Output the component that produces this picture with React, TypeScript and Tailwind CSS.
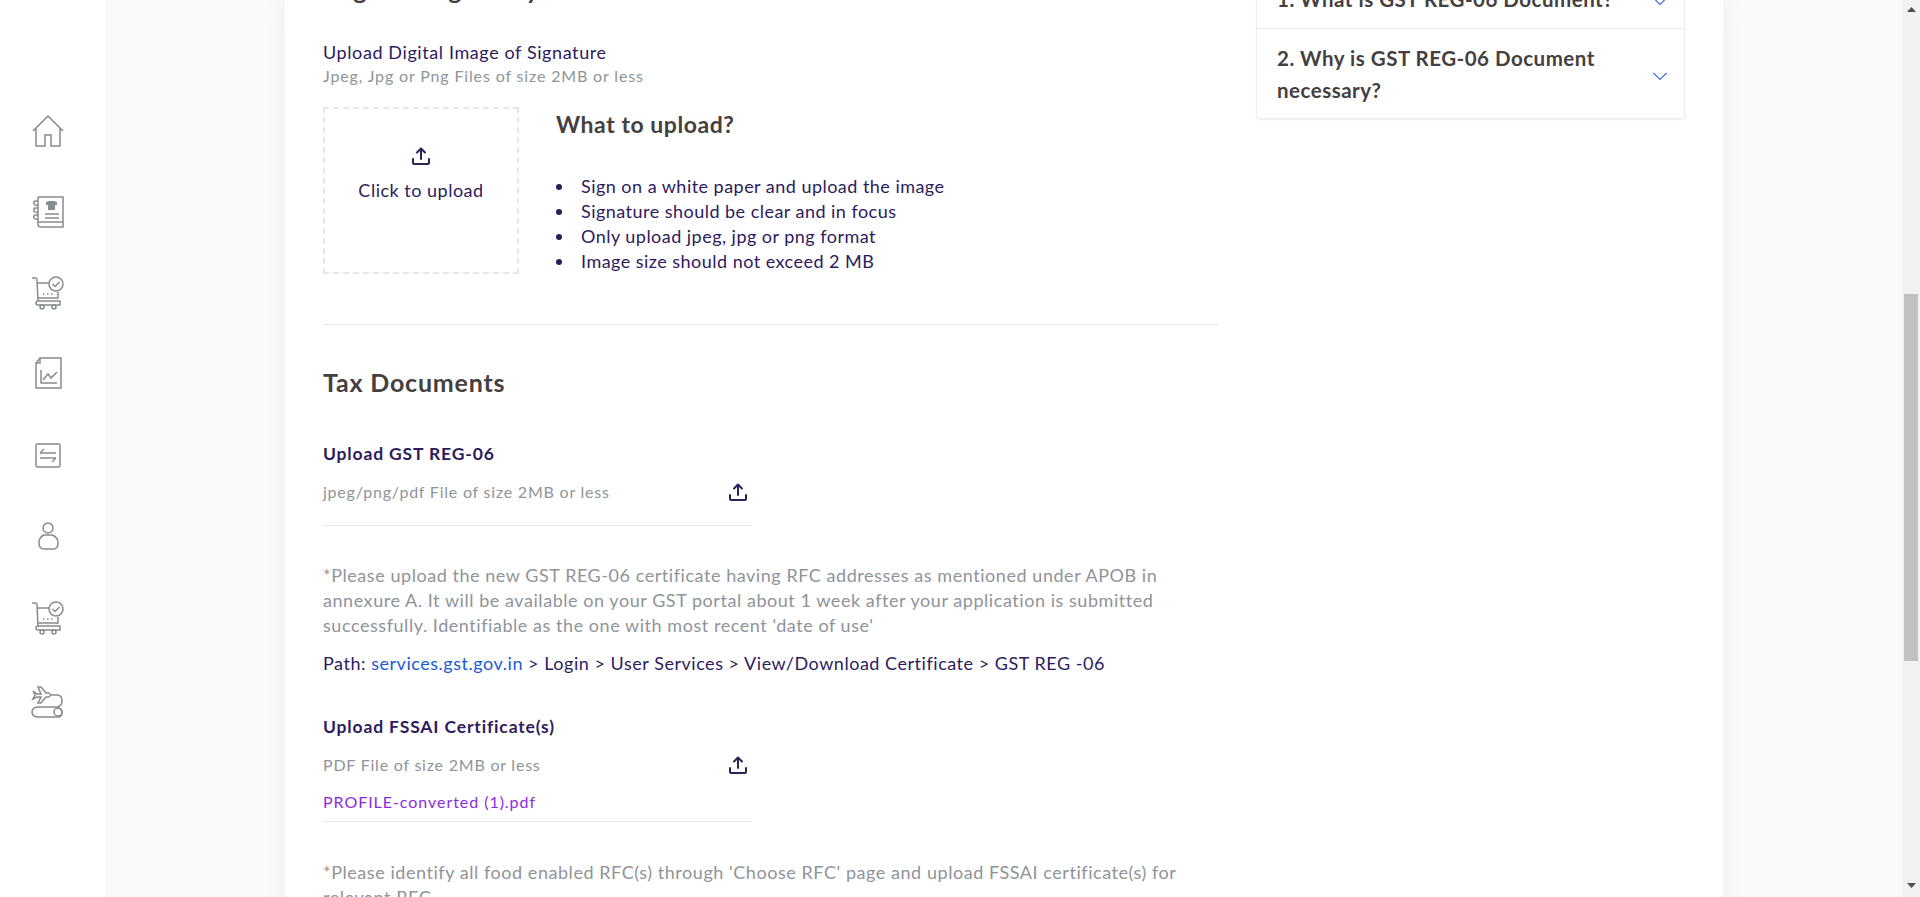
import React from "react";

const IC = "#868c90";

function Home() {
  return (
    <svg width="34" height="34" viewBox="0 0 34 34" fill="none" stroke={IC} strokeWidth="1.5">
      <path d="M2 17 L17 2 L32 17" />
      <path d="M5 14 V32 H14 V21 H20 V32 H29 V14" />
    </svg>
  );
}
function Book() {
  return (
    <svg width="34" height="34" viewBox="0 0 34 34" fill="none" stroke={IC} strokeWidth="1.5">
      <path d="M7 2 H32 V32 H10 Q7 32 7 29 V2" />
      <path d="M7 28 Q7 27 10 27 H32" />
      <path d="M7 6 H4 Q2 7 3 9 Q4 11 7 10 M7 13 H4 Q2 14 3 16 Q4 18 7 17 M7 20 H4 Q2 21 3 23 Q4 25 7 24" />
      <path d="M15 7 L18 6 H23 L26 7 V10 H24 V15 H17 V10 H15 Z" fill={IC} stroke="none" />
      <path d="M14 19 H28 M14 23 H28" />
    </svg>
  );
}
function Cart() {
  return (
    <svg width="34" height="34" viewBox="0 0 34 34" fill="none" stroke={IC} strokeWidth="1.5">
      <path d="M1 2 H5 Q6 2 6 4 L7 25" />
      <path d="M6 7 H18 M27 16 V22 H7" />
      <path d="M9 25 H29 V29 H7 Q5 29 5 27 Q5 25 7 25 Z" />
      <circle cx="11" cy="31" r="2" />
      <circle cx="23" cy="31" r="2" />
      <circle cx="25" cy="8" r="7" />
      <path d="M21.5 8 L24 10.5 L28.5 6" />
      <path d="M12 18 H13.5 M16 18 H17.5 M20 18 H21.5" />
    </svg>
  );
}
function Report() {
  return (
    <svg width="34" height="34" viewBox="0 0 34 34" fill="none" stroke={IC} strokeWidth="1.5">
      <path d="M9 1 H30 V31 H5 V6 Z" />
      <path d="M9 1 V6 H5" />
      <path d="M10 13 V26 H26" />
      <path d="M12 23 L17 17 L20 21 L26 15" />
    </svg>
  );
}
function Swap() {
  return (
    <svg width="34" height="34" viewBox="0 0 34 34" fill="none" stroke={IC} strokeWidth="1.5">
      <rect x="5" y="6" width="24" height="23" rx="1.5" />
      <path d="M9 15 H25 M13 11 L9 15 M9 20 H25 M21 24 L25 20" />
    </svg>
  );
}
function User() {
  return (
    <svg width="34" height="34" viewBox="0 0 34 34" fill="none" stroke={IC} strokeWidth="1.5">
      <circle cx="17" cy="9" r="5" />
      <path d="M13 16 H21 Q27 18 27 24 Q27 30 22 30 H13 Q8 30 8 24 Q8 18 13 16 Z" />
    </svg>
  );
}
function Travel() {
  return (
    <svg width="34" height="34" viewBox="0 0 34 34" fill="none" stroke={IC} strokeWidth="1.5">
      <path d="M2 5 L6 8 H10 L7 1 H10 L15 7 H18 Q21 9 18 11 H15 L10 17 H7 L10 11 H6 L2 13 L4 9 Z" />
      <path d="M19 9 H26 Q31 9 31 15 Q31 20 26 21 H8 Q1 21 1 26 Q1 31 8 31 H27" />
      <circle cx="27" cy="26" r="4" />
      <path d="M27 22 Q31 23 31 26 Q31 31 27 31" />
    </svg>
  );
}
function UploadIcon() {
  return (
    <svg width="20" height="20" viewBox="0 0 20 20" fill="none" stroke="#2d2159" strokeWidth="2" strokeLinecap="round" strokeLinejoin="round">
      <path d="M10 13 V3 M6 6.5 L10 2.5 L14 6.5" />
      <path d="M2 13 V17 Q2 18 3 18 H17 Q18 18 18 17 V13" />
    </svg>
  );
}
function Chevron({ className }: { className?: string }) {
  return (
    <svg className={className} width="14" height="9" viewBox="0 0 14 9" fill="none" stroke="#3b6fe6" strokeWidth="1.2">
      <path d="M0.5 1 L7 7.5 L13.5 1" />
    </svg>
  );
}

function FileRow({ title, hint, file }: { title: string; hint: string; file?: string }) {
  return (
    <div className="w-[429px]">
      <div className="text-[17.5px] leading-[25px] font-bold tracking-[0.85px] text-[#2d1b5e]">{title}</div>
      <div className="mt-[13px] flex items-center justify-between">
        <span className="text-[16px] leading-[25px] tracking-[0.78px] text-[#8f9499]">{hint}</span>
        <span className="mr-[4px]"><UploadIcon /></span>
      </div>
      {file && <div className="mt-[12px] text-[16px] leading-[25px] tracking-[0.95px] text-[#8a2be2]">{file}</div>}
      <div className={`${file ? "mt-[7px]" : "mt-[21px]"} border-b border-[#e8e8e8]`} />
    </div>
  );
}

const tips = [
  "Sign on a white paper and upload the image",
  "Signature should be clear and in focus",
  "Only upload jpeg, jpg or png format",
  "Image size should not exceed 2 MB",
];

export default function App() {
  return (
    <div className="flex h-[897px] overflow-hidden bg-[#f9fafc] font-['Lato','Liberation_Sans',sans-serif]">
      <aside className="flex w-[106px] shrink-0 flex-col bg-white pt-[90px] pr-[10px]">
        <div className="flex h-[81px] items-center justify-center"><Home /></div>
        <div className="flex h-[81px] items-center justify-center"><Book /></div>
        <div className="flex h-[81px] items-center justify-center"><Cart /></div>
        <div className="flex h-[81px] items-center justify-center"><Report /></div>
        <div className="flex h-[81px] items-center justify-center"><Swap /></div>
        <div className="flex h-[81px] items-center justify-center"><User /></div>
        <div className="flex h-[83px] items-center justify-center"><Cart /></div>
        <div className="flex h-[88px] items-center justify-center"><Travel /></div>
      </aside>

      <main className="flex w-[1796px] shrink-0 justify-center px-[179px]">
        <div className="flex h-[1000px] w-[1438px] shrink-0 justify-between bg-white px-[38px] shadow-[0_0_30px_rgba(0,0,0,0.05)]">
          <section className="w-[896px] shrink-0">
            <h2 className="-mt-[26px] text-[25px] leading-[30px] font-bold tracking-[0.8px] text-[#45403f]">Register Signatory</h2>
            <div className="mt-[36px] text-[18px] leading-[24px] tracking-[0.6px] text-[#2d1b5e]">Upload Digital Image of Signature</div>
            <div className="mt-[1px] text-[16px] leading-[22px] tracking-[0.85px] text-[#8f9499]">Jpeg, Jpg or Png Files of size 2MB or less</div>

            <div className="mt-[20px] flex">
              <div className="flex h-[167px] w-[196px] shrink-0 flex-col items-center border-2 border-dashed border-[#e6e6e6] pt-[37px]">
                <UploadIcon />
                <span className="mt-[12px] text-[18px] leading-[24px] tracking-[0.5px] text-[#2d1b5e]">Click to upload</span>
              </div>
              <div className="ml-[37px]">
                <h3 className="mt-[2px] text-[23px] leading-[30px] font-bold tracking-[0.55px] text-[#45403f]">What to upload?</h3>
                <ul className="mt-[35px] text-[18px] leading-[25px] tracking-[0.47px] text-[#2d1b5e]">
                  {tips.map((t) => (
                    <li key={t} className="flex items-center">
                      <span className="mr-[19px] h-[6px] w-[6px] shrink-0 rounded-full bg-[#2d1b5e]" />
                      {t}
                    </li>
                  ))}
                </ul>
              </div>
            </div>

            <div className="mt-[50px] border-b border-[#e8e8e8]" />

            <h2 className="mt-[42px] text-[25px] leading-[30px] font-bold tracking-[0.8px] text-[#45403f]">Tax Documents</h2>

            <div className="mt-[44px]">
              <FileRow title="Upload GST REG-06" hint="jpeg/png/pdf File of size 2MB or less" />
            </div>

            <div className="mt-[37px] text-[18px] leading-[25px] tracking-[0.55px] text-[#8f9499]">
              *Please upload the new GST REG-06 certificate having RFC addresses as mentioned under APOB in annexure A. It will be available on your GST portal about 1 week after your application is submitted successfully. Identifiable as the one with most recent 'date of use'
            </div>
            <div className="mt-[13px] text-[18px] leading-[25px] tracking-[0.53px] text-[#2d1b5e]">
              Path: <span className="text-[#1a5ad7]">services.gst.gov.in</span> &gt; Login &gt; User Services &gt; View/Download Certificate &gt; GST REG -06
            </div>

            <div className="mt-[38px]">
              <FileRow title="Upload FSSAI Certificate(s)" hint="PDF File of size 2MB or less" file="PROFILE-converted (1).pdf" />
            </div>

            <div className="mt-[38px] text-[18px] leading-[25px] tracking-[0.55px] text-[#8f9499]">
              *Please identify all food enabled RFC(s) through 'Choose RFC' page and upload FSSAI certificate(s) for relevant RFC
            </div>
          </section>

          <aside className="h-[119px] w-[429px] shrink-0 rounded-b-[4px] border border-t-0 border-[#ececec] bg-white shadow-[0_1px_2px_rgba(0,0,0,0.06)]">
            <div className="flex h-[29px] items-end justify-between border-b border-[#ececec] pr-[17px] pb-[13px] pl-[20px]">
              <span className="text-[20.5px] leading-[32px] font-bold tracking-[0.5px] whitespace-nowrap text-[#45403f]">1. What is GST REG-06 Document?</span>
              <Chevron className="-translate-y-[9px]" />
            </div>
            <div className="flex items-center justify-between py-[13px] pr-[17px] pl-[20px]">
              <span className="w-[340px] text-[20.5px] leading-[32px] font-bold tracking-[0.5px] text-[#45403f]">2. Why is GST REG-06 Document necessary?</span>
              <Chevron className="mt-[5px]" />
            </div>
          </aside>
        </div>
      </main>

      <div className="flex w-[18px] shrink-0 flex-col items-center bg-[#f1f1f1]">
        <svg className="mt-[7px]" width="9" height="5" viewBox="0 0 9 5"><path d="M4.5 0 L9 5 H0 Z" fill="#505050" /></svg>
        <div className="mt-[282px] h-[367px] w-[14px] bg-[#c1c1c1]" />
        <svg className="mt-[222px]" width="9" height="5" viewBox="0 0 9 5"><path d="M4.5 5 L9 0 H0 Z" fill="#505050" /></svg>
      </div>
    </div>
  );
}
